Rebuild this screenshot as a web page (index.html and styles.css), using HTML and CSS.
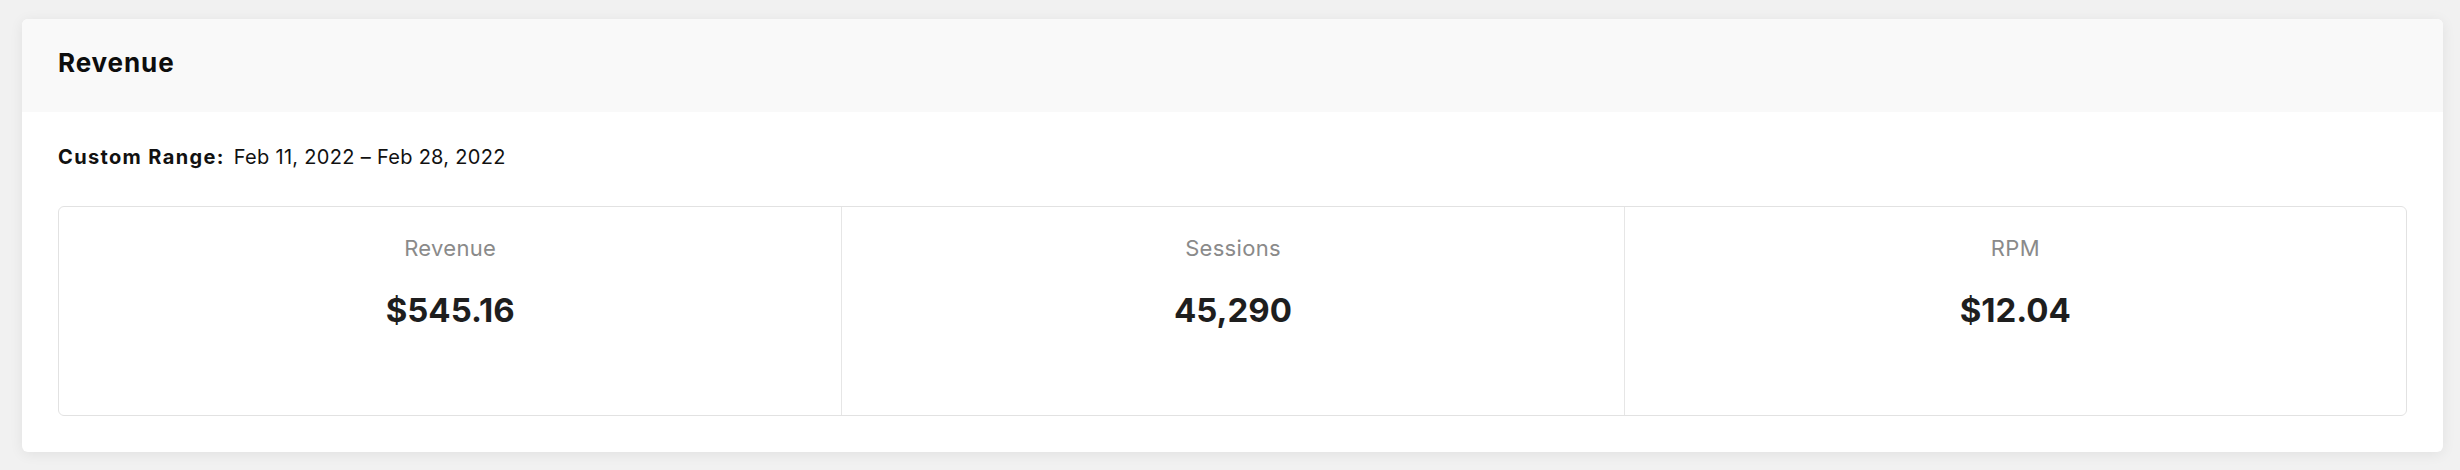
FILE: index.html
```html
<!DOCTYPE html>
<html lang="en">
<head>
<meta charset="utf-8">
<title>Revenue</title>
<link rel="stylesheet" href="styles.css">
</head>
<body>
<div class="page">
  <section class="card">
    <header class="card-header">
      <h2 class="card-title">Revenue</h2>
    </header>
    <div class="card-body">
      <p class="range"><span class="range-label">Custom Range:</span><span class="range-value">Feb 11, 2022 – Feb 28, 2022</span></p>
      <div class="stats">
        <div class="stat">
          <div class="stat-label">Revenue</div>
          <div class="stat-value">$545.16</div>
        </div>
        <div class="stat">
          <div class="stat-label">Sessions</div>
          <div class="stat-value">45,290</div>
        </div>
        <div class="stat">
          <div class="stat-label">RPM</div>
          <div class="stat-value">$12.04</div>
        </div>
      </div>
    </div>
  </section>
</div>
</body>
</html>
```
FILE: styles.css
```css
html, body {
  margin: 0;
  padding: 0;
  background: #f1f1f1;
  font-family: "Inter", "Liberation Sans", sans-serif;
}

.page {
  padding: 19px 17px 19px 22px;
}

.card {
  background: #ffffff;
  border-radius: 6px;
  box-shadow: 0 2px 14px rgba(0, 0, 0, 0.07);
  overflow: hidden;
}

.card-header {
  height: 93px;
  background: #f9f9f9;
  padding: 0 36px;
  display: flex;
  align-items: center;
  box-sizing: border-box;
  padding-bottom: 6px;
}

.card-title {
  margin: 0;
  font-size: 26px;
  font-weight: 700;
  color: #0d0d0d;
  letter-spacing: 0.9px;
}

.card-body {
  padding: 32px 36px 36px;
}

.range {
  margin: 0 0 36px;
  font-size: 20px;
  line-height: 26px;
  color: #111111;
}

.range-label {
  font-weight: 700;
  letter-spacing: 1.35px;
  margin-right: 9px;
}

.range-value {
  font-weight: 400;
  letter-spacing: 0.3px;
}

.stats {
  display: grid;
  grid-template-columns: 1fr 1fr 1fr;
  border: 1px solid #e2e2e2;
  border-radius: 6px;
  height: 210px;
  box-sizing: border-box;
}

.stat {
  display: flex;
  flex-direction: column;
  align-items: center;
  padding-top: 26px;
}

.stat + .stat {
  border-left: 1px solid #e6e6e6;
}

.stat-label {
  font-size: 22px;
  line-height: 30px;
  color: #8a8a8a;
  letter-spacing: 0.3px;
}

.stat-value {
  margin-top: 27px;
  font-size: 33px;
  line-height: 40px;
  font-weight: 700;
  color: #1e1e1e;
}
```
